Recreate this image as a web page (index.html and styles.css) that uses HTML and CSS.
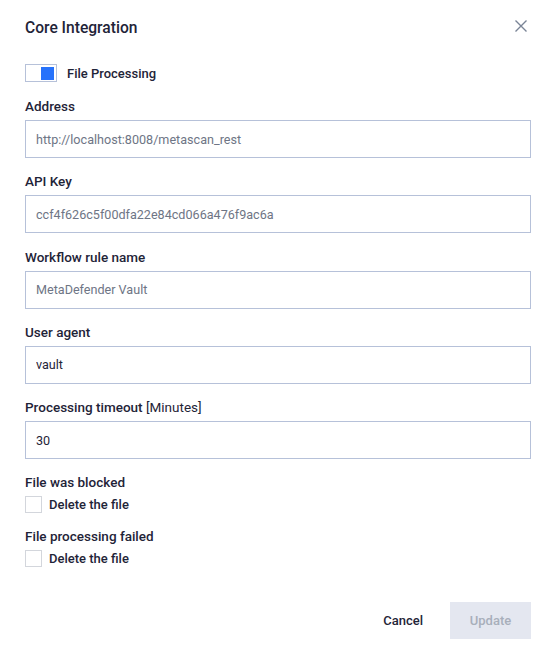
FILE: index.html
```html
<!DOCTYPE html>
<html>
<head>
  <title>Core Integration</title>
  <link rel="stylesheet" href="styles.css">
</head>
<body>
  <div class="dialog">
    <div class="header">
      <div class="title">Core Integration</div>
      <button class="close-btn" aria-label="Close">
        <svg width="12" height="12" viewBox="0 0 12 12">
          <path d="M0.5 0.5 L11.5 11.5 M11.5 0.5 L0.5 11.5" stroke="#7a8496" stroke-width="1.4" fill="none"/>
        </svg>
      </button>
    </div>

    <div class="toggle-row">
      <label class="toggle">
        <input type="checkbox" checked>
        <span class="knob"></span>
      </label>
      <span class="toggle-label">File Processing</span>
    </div>

    <div class="field first">
      <label class="field-label">Address</label>
      <input type="text" class="field-input muted" value="http://localhost:8008/metascan_rest">
    </div>

    <div class="field">
      <label class="field-label">API Key</label>
      <input type="text" class="field-input muted" value="ccf4f626c5f00dfa22e84cd066a476f9ac6a">
    </div>

    <div class="field">
      <label class="field-label">Workflow rule name</label>
      <input type="text" class="field-input muted" value="MetaDefender Vault">
    </div>

    <div class="field">
      <label class="field-label">User agent</label>
      <input type="text" class="field-input" value="vault">
    </div>

    <div class="field">
      <label class="field-label">Processing timeout <span class="unit">[Minutes]</span></label>
      <input type="text" class="field-input" value="30">
    </div>

    <div class="check-group">
      <div class="field-label">File was blocked</div>
      <label class="check-row">
        <span class="check-box"></span>
        <span class="check-text">Delete the file</span>
      </label>
    </div>

    <div class="check-group">
      <div class="field-label">File processing failed</div>
      <label class="check-row">
        <span class="check-box"></span>
        <span class="check-text">Delete the file</span>
      </label>
    </div>

    <div class="footer">
      <button class="btn-cancel">Cancel</button>
      <button class="btn-update" disabled>Update</button>
    </div>
  </div>
</body>
</html>
```

FILE: styles.css
```css
:root {
  --text-color: #1f2438;
  --text-muted: #6e7585;
  --border-color: #b6c1d9;
  --check-border: #d3d6dc;
  --primary-color: #2672fb;
  --disabled-bg: #e4e7f0;
  --disabled-text: #a8afbb;
}

* {
  margin: 0;
  padding: 0;
  box-sizing: border-box;
}

body {
  font-family: Roboto, "Liberation Sans", sans-serif;
  color: var(--text-color);
  background-color: #fff;
}

.dialog {
  width: 557px;
  padding: 18px 26px 0 25px;
}

.header {
  display: flex;
  align-items: center;
  justify-content: space-between;
  height: 20px;
}

.title {
  font-size: 15.6px;
  font-weight: 500;
}

.close-btn {
  border: none;
  background: none;
  width: 12px;
  height: 12px;
  margin-right: 4px;
  margin-top: -5px;
  cursor: pointer;
}

.close-btn svg {
  display: block;
}

.toggle-row {
  display: flex;
  align-items: center;
  margin-top: 26px;
  gap: 10px;
}

.toggle {
  position: relative;
  display: inline-block;
  width: 32px;
  height: 18px;
  border: 1px solid var(--border-color);
  background: #fff;
}

.toggle input {
  opacity: 0;
  width: 0;
  height: 0;
}

.knob {
  position: absolute;
  top: 2px;
  right: 2px;
  width: 13px;
  height: 13px;
  background-color: var(--primary-color);
}

.toggle-label {
  font-size: 13px;
  font-weight: 500;
}

.field {
  margin-top: 15.25px;
}

.field.first {
  margin-top: 16px;
}

.field-label {
  display: block;
  font-size: 13.5px;
  font-weight: 500;
  line-height: 16px;
  margin-bottom: 6px;
}

.unit {
  font-weight: 400;
}

.field-input {
  display: block;
  width: 100%;
  height: 38px;
  padding: 0 10px;
  border: 1px solid var(--border-color);
  border-radius: 0;
  font-family: Roboto, "Liberation Sans", sans-serif;
  font-size: 12.6px;
  color: var(--text-color);
  outline: none;
}

.field-input.muted {
  color: var(--text-muted);
}

.check-group {
  margin-top: 15px;
}

.check-group .field-label {
  margin-bottom: 6px;
}

.check-group + .check-group {
  margin-top: 15px;
}

.check-row {
  display: flex;
  align-items: center;
  gap: 7px;
}

.check-box {
  width: 17px;
  height: 17px;
  border: 1px solid var(--check-border);
  background: #fff;
}

.check-text {
  font-size: 13px;
  font-weight: 500;
}

.footer {
  display: flex;
  justify-content: flex-end;
  align-items: center;
  gap: 27px;
  margin-top: 35px;
}

.btn-cancel {
  border: none;
  background: none;
  font-family: Roboto, "Liberation Sans", sans-serif;
  font-size: 13px;
  font-weight: 500;
  color: var(--text-color);
  cursor: pointer;
}

.btn-update {
  width: 81px;
  height: 37px;
  border: none;
  background-color: var(--disabled-bg);
  color: var(--disabled-text);
  font-family: Roboto, "Liberation Sans", sans-serif;
  font-size: 13px;
  font-weight: 500;
}
```
